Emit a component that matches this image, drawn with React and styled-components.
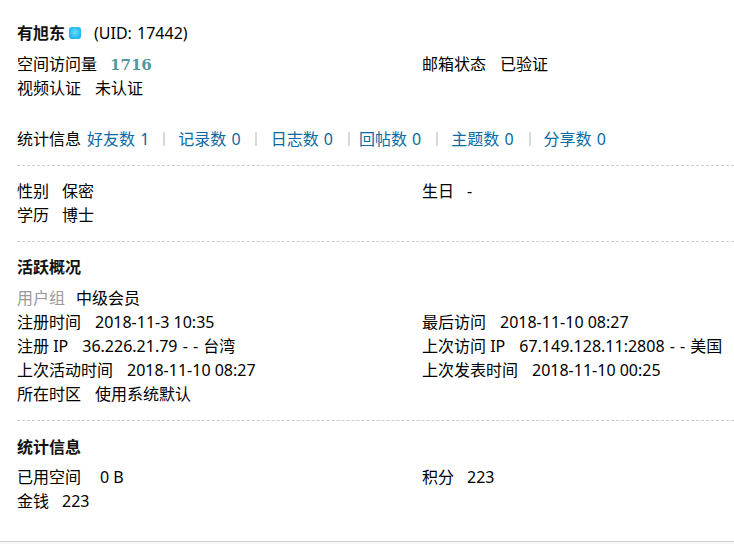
import { Fragment } from "react";
import styled, { createGlobalStyle } from "styled-components";

const GlobalStyle = createGlobalStyle`
  html, body {
    margin: 0;
    padding: 0;
    background: #f6f6f6;
  }
  body {
    font-family: "Noto Sans", "Noto Sans CJK SC", sans-serif;
    font-size: 16px;
    line-height: 24px;
    color: #000;
  }
`;

const Page = styled.div`
  width: 734px;
  height: 542px;
  box-sizing: border-box;
  padding: 21px 0 0 17px;
  background: #fff;
  border-bottom: 1px solid #cfcfcf;
  overflow: hidden;
`;

const UserName = styled.h2`
  display: flex;
  align-items: center;
  margin: 0 0 7px;
  font-size: 16px;
  line-height: 24px;
  font-weight: normal;
  word-spacing: 1px;
  strong {
    color: #111;
  }
`;

const Dot = styled.span`
  width: 12px;
  height: 12px;
  margin: 0 13px 0 4px;
  border-radius: 3px;
  background: radial-gradient(circle at 50% 45%, #6fdcf8 0%, #2ec0f3 55%, #0d9fe4 100%);
`;

const Section = styled.div`
  padding-bottom: 14px;
  margin-bottom: ${(p) => p.$after || 13}px;
  border-bottom: ${(p) => (p.$plain ? "none" : "1px dashed #cdcdcd")};
`;

const Rows = styled.ul`
  display: grid;
  grid-template-columns: 405px 1fr;
  margin: 0;
  padding: 0;
  list-style: none;
`;

const Item = styled.li`
  grid-column: ${(p) => (p.$full ? "1 / -1" : "auto")};
  white-space: nowrap;
`;

const Label = styled.em`
  font-style: normal;
  color: ${(p) => (p.$muted ? "#999" : "#000")};
  margin-right: ${(p) => p.$gap || 14}px;
`;

const Place = styled.span`
  word-spacing: 1px;
`;

const Visits = styled.strong`
  color: #4f9a9e;
  font-family: "DejaVu Serif", "Liberation Serif", serif;
  font-size: 15px;
  line-height: 1;
`;

const Stats = styled.div`
  display: flex;
  align-items: center;
  margin-top: 27px;
  white-space: nowrap;
`;

const StatLink = styled.a`
  color: #0b6aa2;
  text-decoration: none;
  word-spacing: 1px;
  margin-left: ${(p) => (p.$first ? 6 : 0)}px;
`;

const Pipe = styled.span`
  width: 2px;
  height: 14px;
  margin: 0 ${(p) => p.$right}px 0 ${(p) => p.$left}px;
  background: #d5d9e2;
`;

const Heading = styled.h3`
  margin: 0 0 ${(p) => p.$after || 7}px;
  font-size: 16px;
  line-height: 24px;
  font-weight: bold;
  color: #111;
`;

const stats = [
  { text: "好友数 1" },
  { text: "记录数 0", left: 14, right: 13 },
  { text: "日志数 0", left: 14, right: 14 },
  { text: "回帖数 0", left: 15, right: 9 },
  { text: "主题数 0", left: 15, right: 13 },
  { text: "分享数 0", left: 15, right: 13 },
];

export default function App() {
  return (
    <>
      <GlobalStyle />
      <Page>
        <UserName>
          <strong>有旭东</strong>
          <Dot />
          (UID: 17442)
        </UserName>
        <Section>
          <Rows>
            <Item><Label $gap={13}>空间访问量</Label><Visits>1716</Visits></Item>
            <Item><Label>邮箱状态</Label>已验证</Item>
            <Item $full><Label>视频认证</Label>未认证</Item>
          </Rows>
          <Stats>
            统计信息
            {stats.map((s, i) => (
              <Fragment key={s.text}>
                {i > 0 && <Pipe $left={s.left} $right={s.right} />}
                <StatLink href="#" $first={i === 0}>{s.text}</StatLink>
              </Fragment>
            ))}
          </Stats>
        </Section>
        <Section>
          <Rows>
            <Item><Label $gap={13}>性别</Label>保密</Item>
            <Item><Label $gap={13}>生日</Label>-</Item>
            <Item $full><Label $gap={13}>学历</Label>博士</Item>
          </Rows>
        </Section>
        <Section $after={14}>
          <Heading>活跃概况</Heading>
          <Rows>
            <Item $full><Label $muted $gap={11}>用户组</Label>中级会员</Item>
            <Item><Label>注册时间</Label>2018-11-3 10:35</Item>
            <Item><Label>最后访问</Label>2018-11-10 08:27</Item>
            <Item><Label>注册 IP</Label><Place>36.226.21.79 - - 台湾</Place></Item>
            <Item><Label>上次访问 IP</Label><Place>67.149.128.11:2808 - - 美国</Place></Item>
            <Item><Label>上次活动时间</Label>2018-11-10 08:27</Item>
            <Item><Label>上次发表时间</Label>2018-11-10 00:25</Item>
            <Item $full><Label>所在时区</Label>使用系统默认</Item>
          </Rows>
        </Section>
        <Section $plain>
          <Heading $after={6}>统计信息</Heading>
          <Rows>
            <Item><Label $gap={19}>已用空间</Label>0 B</Item>
            <Item><Label $gap={13}>积分</Label>223</Item>
            <Item $full><Label $gap={13}>金钱</Label>223</Item>
          </Rows>
        </Section>
      </Page>
    </>
  );
}
